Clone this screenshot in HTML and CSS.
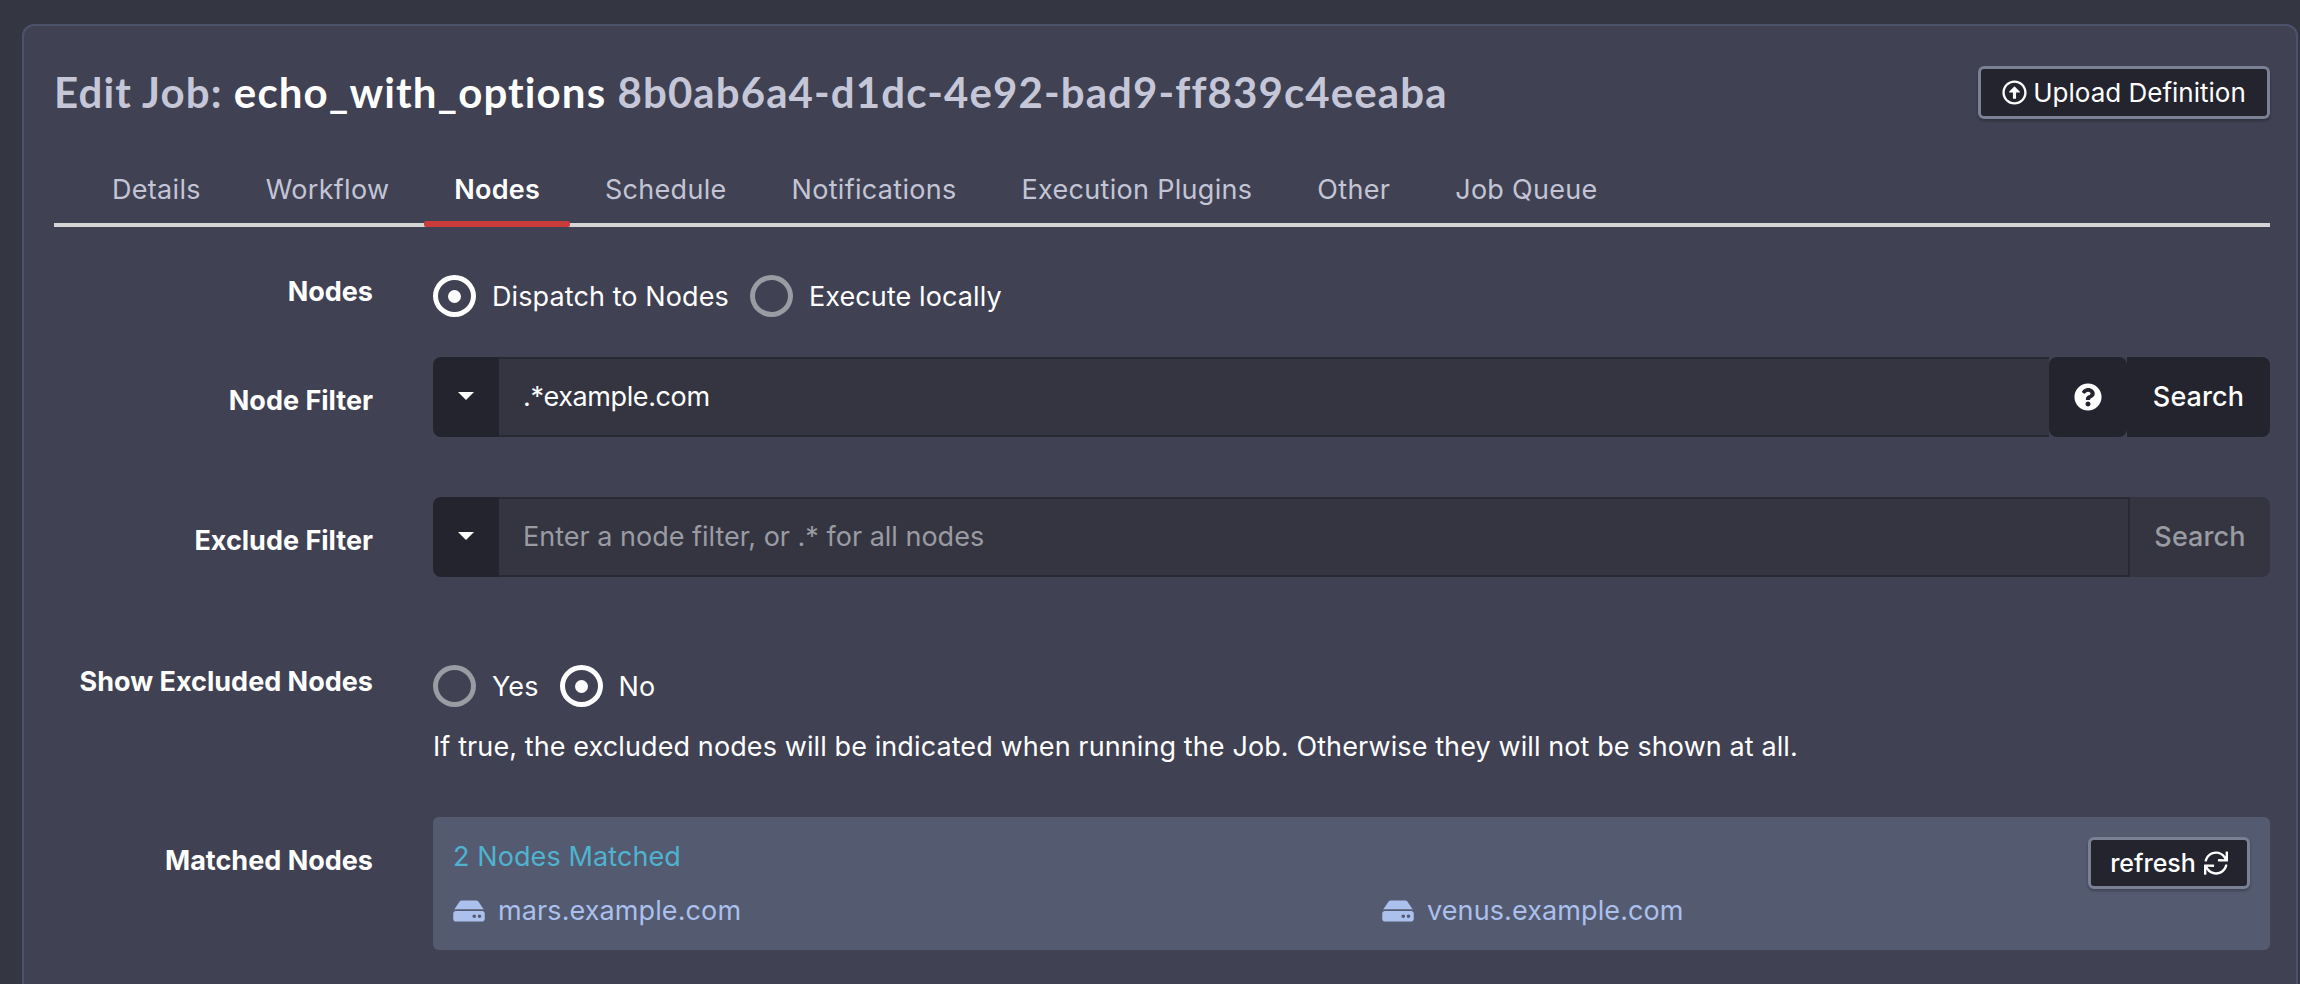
FILE: index.html
```html
<!DOCTYPE html>
<html lang="en">
<head>
<meta charset="utf-8">
<title>Edit Job</title>
<link rel="stylesheet" href="styles.css">
</head>
<body>
<main class="card">
  <header class="head">
    <h1 class="title"><span class="muted">Edit Job:</span> echo_with_options <span class="muted uuid">8b0ab6a4-d1dc-4e92-bad9-ff839c4eeaba</span></h1>
    <button class="btn btn-upload"><svg class="ico-upload" viewBox="0 0 512 512"><path d="M256 504c137 0 248-111 248-248S393 8 256 8 8 119 8 256s111 248 248 248zm0-448c110.5 0 200 89.5 200 200s-89.5 200-200 200S56 366.5 56 256 145.5 56 256 56zm20 328h-40c-6.6 0-12-5.4-12-12V256h-67c-10.7 0-16-12.9-8.5-20.5l99-99c4.7-4.7 12.3-4.7 17 0l99 99c7.6 7.6 2.2 20.5-8.5 20.5h-67v116c0 6.6-5.4 12-12 12z"/></svg>Upload Definition</button>
  </header>

  <nav class="tabs">
    <a class="tab">Details</a>
    <a class="tab">Workflow</a>
    <a class="tab active">Nodes</a>
    <a class="tab">Schedule</a>
    <a class="tab">Notifications</a>
    <a class="tab">Execution Plugins</a>
    <a class="tab">Other</a>
    <a class="tab">Job Queue</a>
  </nav>

  <section class="row row-nodes">
    <div class="label">Nodes</div>
    <div class="radios">
      <span class="radio on"></span><span class="radio-text">Dispatch to Nodes</span>
      <span class="radio"></span><span class="radio-text">Execute locally</span>
    </div>
  </section>

  <section class="row row-filter">
    <div class="label label-filter">Node Filter</div>
    <div class="group">
      <span class="caret-btn"><i class="caret"></i></span>
      <span class="input">.*example.com</span>
      <span class="help"><svg class="ico-help" viewBox="0 0 512 512"><path d="M504 256c0 136.997-111.043 248-248 248S8 392.997 8 256C8 119.083 119.043 8 256 8s248 111.083 248 248zM262.655 90c-54.497 0-89.255 22.957-116.549 63.758-3.536 5.286-2.353 12.415 2.715 16.258l34.699 26.31c5.205 3.947 12.621 3.008 16.665-2.122 17.864-22.658 30.113-35.797 57.303-35.797 20.429 0 45.698 13.148 45.698 32.958 0 14.976-12.363 22.667-32.534 33.976C247.128 238.528 216 254.941 216 296v4c0 6.627 5.373 12 12 12h56c6.627 0 12-5.373 12-12v-1.333c0-28.462 83.186-29.647 83.186-106.667 0-58.002-60.165-102-116.531-102zM256 338c-25.365 0-46 20.635-46 46 0 25.364 20.635 46 46 46s46-20.636 46-46c0-25.365-20.635-46-46-46z"/></svg></span>
      <span class="search">Search</span>
    </div>
  </section>

  <section class="row row-exclude">
    <div class="label label-filter">Exclude Filter</div>
    <div class="group">
      <span class="caret-btn"><i class="caret"></i></span>
      <span class="input placeholder">Enter a node filter, or .* for all nodes</span>
      <span class="search disabled">Search</span>
    </div>
  </section>

  <section class="row row-show">
    <div class="label">Show Excluded Nodes</div>
    <div>
      <div class="radios">
        <span class="radio"></span><span class="radio-text">Yes</span>
        <span class="radio on"></span><span class="radio-text">No</span>
      </div>
      <p class="hint">If true, the excluded nodes will be indicated when running the Job. Otherwise they will not be shown at all.</p>
    </div>
  </section>

  <section class="row row-matched">
    <div class="label label-matched">Matched Nodes</div>
    <div class="panel">
      <div class="panel-top">
        <div class="matched">2 Nodes Matched</div>
        <button class="btn btn-refresh">refresh <svg class="ico-sync" viewBox="0 0 512 512"><path d="M500 8h-27.711c-6.739 0-12.157 5.548-11.997 12.286l2.347 98.575C418.212 52.043 342.256 8 256 8 134.813 8 33.933 94.924 12.296 209.824 10.908 217.193 16.604 224 24.103 224h28.576c5.674 0 10.542-3.982 11.737-9.529C83.441 126.128 161.917 60 256 60c79.545 0 147.942 47.282 178.676 115.302l-126.39-3.009c-6.737-.16-12.286 5.257-12.286 11.997V212c0 6.627 5.373 12 12 12h192c6.627 0 12-5.373 12-12V20c0-6.627-5.373-12-12-12zm-12.103 280h-28.576c-5.674 0-10.542 3.982-11.737 9.529C428.559 385.872 350.083 452 256 452c-79.546 0-147.942-47.282-178.676-115.302l126.39 3.009c6.737.16 12.286-5.257 12.286-11.997V300c0-6.627-5.373-12-12-12H12c-6.627 0-12 5.373-12 12v192c0 6.627 5.373 12 12 12h27.711c6.739 0 12.157-5.548 11.997-12.286l-2.347-98.575C93.788 459.957 169.744 504 256 504c121.187 0 222.067-86.924 243.704-201.824 1.388-7.369-4.308-14.176-11.807-14.176z"/></svg></button>
      </div>
      <div class="nodes">
        <div class="node"><svg class="ico-hdd" viewBox="0 0 576 512"><path d="M576 304v96c0 26.51-21.49 48-48 48H48c-26.51 0-48-21.49-48-48v-96c0-26.51 21.49-48 48-48h480c26.51 0 48 21.49 48 48zm-48-80a79.557 79.557 0 0 1 30.777 6.165L462.25 85.374A48.003 48.003 0 0 0 422.311 64H153.689a48 48 0 0 0-39.938 21.374L17.223 230.165A79.557 79.557 0 0 1 48 224h480zm-48 96c-17.673 0-32 14.327-32 32s14.327 32 32 32 32-14.327 32-32-14.327-32-32-32zm-96 0c-17.673 0-32 14.327-32 32s14.327 32 32 32 32-14.327 32-32-14.327-32-32-32z"/></svg>mars.example.com</div>
        <div class="node"><svg class="ico-hdd" viewBox="0 0 576 512"><path d="M576 304v96c0 26.51-21.49 48-48 48H48c-26.51 0-48-21.49-48-48v-96c0-26.51 21.49-48 48-48h480c26.51 0 48 21.49 48 48zm-48-80a79.557 79.557 0 0 1 30.777 6.165L462.25 85.374A48.003 48.003 0 0 0 422.311 64H153.689a48 48 0 0 0-39.938 21.374L17.223 230.165A79.557 79.557 0 0 1 48 224h480zm-48 96c-17.673 0-32 14.327-32 32s14.327 32 32 32 32-14.327 32-32-14.327-32-32-32zm-96 0c-17.673 0-32 14.327-32 32s14.327 32 32 32 32-14.327 32-32-14.327-32-32-32z"/></svg>venus.example.com</div>
      </div>
    </div>
  </section>
</main>
</body>
</html>
```
FILE: styles.css
```css
* { box-sizing: border-box; }
html, body { margin: 0; height: 984px; overflow: hidden; }
body {
  background: #343641;
  font-family: "Inter", "Noto Sans", sans-serif;
  font-size: 27px;
  letter-spacing: .1px;
  color: #fff;
  padding: 24px 2px 0 22px;
}
.card {
  height: 980px;
  background: #404152;
  border: 2px solid #4d526b;
  border-bottom: 0;
  border-radius: 12px 12px 0 0;
  padding: 40px 26px 0 30px;
}
.head { display: flex; justify-content: space-between; align-items: center; height: 53px; }
.title {
  margin: 0;
  font-family: "Lato", sans-serif;
  font-size: 42px;
  line-height: 53px;
  font-weight: 700;
  letter-spacing: 1.1px;
  white-space: nowrap;
}
.muted { color: #c5c7d8; }
.btn {
  font-family: inherit;
  color: #fff;
  background: #23242e;
  border: 3px solid #7a8194;
  border-radius: 6px;
  box-shadow: 0 2px 3px rgba(0, 0, 0, .25);
  display: flex;
  align-items: center;
  justify-content: center;
}
.btn-upload { width: 292px; height: 53px; font-size: 26px; padding: 0; }
.ico-upload { width: 25px; height: 25px; fill: #fff; margin-right: 6px; }

.tabs { display: flex; gap: 5px; margin-top: 44px; padding-left: 28px; border-bottom: 4px solid #d5d5d5; height: 64px; }
.tab { position: relative; padding: 0 30px; line-height: 54px; color: #c3c5d6; letter-spacing: .3px; }
.tab.active { color: #fff; font-weight: 600; letter-spacing: .2px; }
.tab.active::after {
  content: "";
  position: absolute;
  left: 0; right: 0; bottom: -4px;
  height: 6px;
  background: #c83c3c;
  border-radius: 2px;
}

.row { display: grid; grid-template-columns: 319px 1fr; column-gap: 60px; }
.label { text-align: right; font-weight: 700; line-height: 34px; white-space: nowrap; letter-spacing: 0; }
.row-nodes { margin-top: 48px; }
.row-filter { margin-top: 40px; }
.row-exclude { margin-top: 60px; }
.row-show { margin-top: 88px; }
.row-matched { margin-top: 52px; }
.label-filter { padding-top: 27px; }
.label-matched { padding-top: 27px; }

.radios { display: flex; align-items: center; height: 42px; }
.radio {
  width: 43px; height: 42px;
  border: 5px solid #9a9ba3;
  border-radius: 50%;
  display: flex; align-items: center; justify-content: center;
  flex: none;
}
.radio.on { border-color: #fff; }
.radio.on::after { content: ""; width: 13px; height: 13px; border-radius: 50%; background: #fff; }
.radio-text { margin: 0 21px 0 16px; line-height: 42px; position: relative; top: 1px; }

.group { display: flex; height: 80px; }
.caret-btn {
  width: 66px; flex: none;
  background: #23242e;
  border-radius: 8px 0 0 8px;
  display: flex; align-items: center; justify-content: center;
}
.caret { width: 0; height: 0; border-left: 8px solid transparent; border-right: 8px solid transparent; border-top: 8px solid #fff; margin-top: -2px; }
.input {
  flex: 1;
  background: #343541;
  border-top: 2px solid #282933;
  border-bottom: 2px solid #282933;
  padding: 0 24px;
  line-height: 75px;
  letter-spacing: -.4px;
}
.placeholder { color: #9a9ba3; letter-spacing: 0; }
.help {
  width: 78px; flex: none;
  background: #23242e;
  border-radius: 8px;
  display: flex; align-items: center; justify-content: center;
}
.ico-help { width: 28px; height: 28px; fill: #fff; }
.search {
  width: 143px; flex: none;
  background: #23242e;
  border-radius: 0 8px 8px 0;
  text-align: center;
  line-height: 79px;
  font-weight: 500;
}
.search.disabled { width: 142px; background: #343541; color: #9a9ba3; border-left: 2px solid #282933; }

.hint { margin: 22px 0 0; line-height: 36px; }

.panel { background: #545a70; border-radius: 6px; height: 133px; padding: 20px 20px 0; }
.panel-top { display: flex; justify-content: space-between; align-items: flex-start; height: 56px; }
.matched { color: #4fb3d0; line-height: 40px; }
.btn-refresh { width: 162px; height: 52px; font-size: 25px; gap: 8px; padding: 0; font-weight: 500; }
.ico-sync { width: 24px; height: 24px; fill: #fff; }
.nodes { display: grid; grid-template-columns: 929px 1fr; }
.node { display: flex; align-items: center; color: #abc0ec; line-height: 36px; }
.ico-hdd { width: 32px; height: 28px; fill: #abc0ec; margin-right: 13px; }
```
